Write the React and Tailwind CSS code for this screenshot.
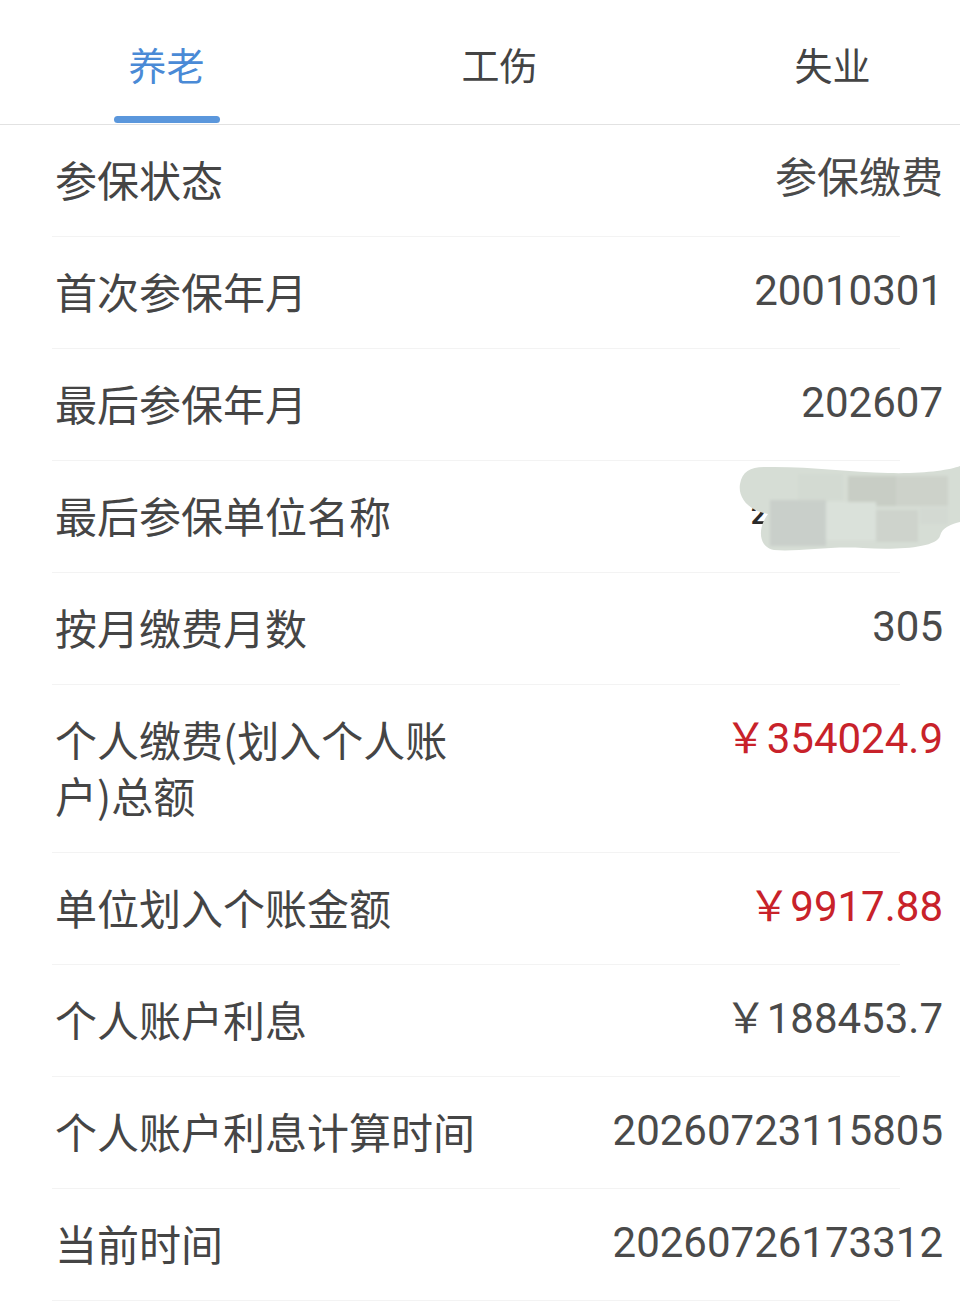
import React from "react";

const rows = [
  { label: "参保状态", value: "参保缴费" },
  { label: "首次参保年月", value: "20010301" },
  { label: "最后参保年月", value: "202607" },
  { label: "最后参保单位名称", blur: true },
  { label: "按月缴费月数", value: "305" },
  { label: "个人缴费(划入个人账户)总额", value: "￥354024.9", red: true, wrap: true },
  { label: "单位划入个账金额", value: "￥9917.88", red: true },
  { label: "个人账户利息", value: "￥188453.7" },
  { label: "个人账户利息计算时间", value: "20260723115805" },
  { label: "当前时间", value: "20260726173312" },
];

function Blur() {
  return (
    <svg className="absolute left-[738px] top-[3px]" width="222" height="88" viewBox="0 0 222 88">
      <defs>
        <filter id="bl" x="-10%" y="-10%" width="120%" height="120%">
          <feGaussianBlur stdDeviation="1.5" />
        </filter>
      </defs>
      <text x="13" y="60" fontSize="26" fontWeight="bold" fill="#2a2a2a" fontFamily="Roboto, sans-serif">2</text>
      <path
        d="M26 3 C 70 2, 110 8, 150 9 C 185 10, 212 6, 222 2 L 222 58 C 214 60, 204 63, 202 72 C 198 84, 160 86, 125 84 C 90 82, 60 88, 36 86 C 22 84, 18 66, 30 50 C 8 46, 0 32, 2 20 C 4 8, 12 3, 26 3 Z"
        fill="#d6ddd5"
      />
      <g filter="url(#bl)">
        <rect x="110" y="12" width="48" height="30" fill="#c8cdc5" />
        <rect x="158" y="12" width="52" height="30" fill="#cdd2ca" />
        <rect x="32" y="36" width="56" height="46" fill="#c9cfca" />
        <rect x="88" y="38" width="50" height="38" fill="#dae1da" />
        <rect x="138" y="46" width="42" height="32" fill="#ced3cc" />
        <rect x="60" y="10" width="45" height="26" fill="#d3dad2" />
        <rect x="182" y="44" width="28" height="16" fill="#d3d9d2" />
      </g>
    </svg>
  );
}

export default function App() {
  return (
    <div className="w-[960px] min-h-[1303px] bg-white overflow-hidden" style={{ fontFamily: "Roboto, 'Noto Sans CJK SC', sans-serif" }}>
      <div className="relative h-[125px] border-b border-[#e2e2e2] flex">
        {["养老", "工伤", "失业"].map((t, i) => (
          <div key={t} className="w-[333px] shrink-0 flex flex-col items-center">
            <div
              className={`mt-[39px] text-[38px] leading-[50px] ${i === 0 ? "text-[#4a8ad6]" : "text-[#444444]"}`}
              style={{ fontFamily: "'Noto Sans CJK SC', sans-serif" }}
            >
              {t}
            </div>
            {i === 0 && <div className="mt-[27px] w-[106px] h-[7px] rounded-full bg-[#5b97dc]" />}
          </div>
        ))}
      </div>
      {rows.map((r) => (
        <div key={r.label}>
          <div className="relative flex justify-between pl-[55px] pr-[17px] pt-[26px] pb-[29px]">
            <div
              className={`text-[42px] leading-[56px] text-[#454545] ${r.wrap ? "w-[410px]" : "whitespace-nowrap"}`}
              style={{ fontFamily: "'Noto Sans CJK SC', sans-serif" }}
            >
              {r.label}
            </div>
            {r.blur ? (
              <Blur />
            ) : (
              <div className={`text-[42px] leading-[56px] whitespace-nowrap ${r.red ? "text-[#c8222a]" : "text-[#4a4a4a]"}`}>
                {r.value}
              </div>
            )}
          </div>
          <div className="ml-[52px] w-[848px] h-px bg-[#f3f3f3]" />
        </div>
      ))}
    </div>
  );
}
